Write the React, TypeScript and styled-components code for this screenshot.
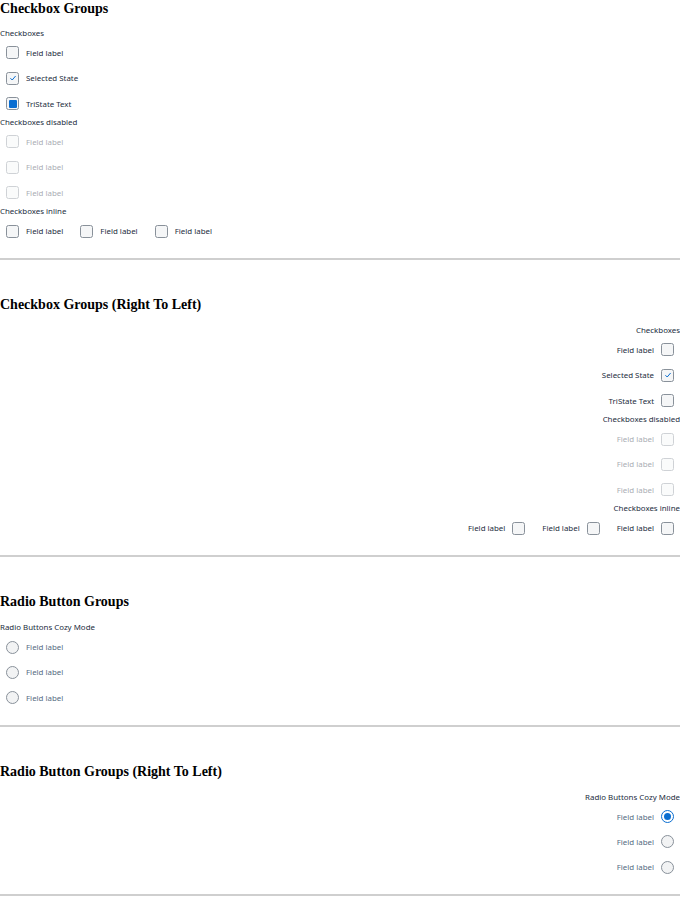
import styled, { createGlobalStyle, css } from "styled-components";

type BoxState = "empty" | "checked" | "tristate";

const GlobalStyle = createGlobalStyle`
  body {
    margin: 0;
    background: #ffffff;
    font-family: "Noto Sans", "Liberation Sans", sans-serif;
  }
`;

export default function App() {
  return (
    <>
      <GlobalStyle />
      <Section $first>
        <Title $first>Checkbox Groups</Title>
        <CheckboxGroups rtl={false} />
      </Section>
      <Divider />
      <Section>
        <Title>Checkbox Groups (Right To Left)</Title>
        <CheckboxGroups rtl />
      </Section>
      <Divider />
      <Section>
        <Title>Radio Button Groups</Title>
        <RadioGroup rtl={false} selected={-1} />
      </Section>
      <Divider />
      <Section>
        <Title>Radio Button Groups (Right To Left)</Title>
        <RadioGroup rtl selected={0} />
      </Section>
      <Divider />
    </>
  );
}

function CheckboxGroups({ rtl }: { rtl: boolean }) {
  const stacked: { label: string; state: BoxState }[] = [
    { label: "Field label", state: "empty" },
    { label: "Selected State", state: "checked" },
    { label: "TriState Text", state: rtl ? "empty" : "tristate" },
  ];
  return (
    <Groups $rtl={rtl}>
      <Fieldset>
        <Legend>Checkboxes</Legend>
        {stacked.map((item) => (
          <Item key={item.label}>
            <Checkbox state={item.state} />
            <Label>{item.label}</Label>
          </Item>
        ))}
      </Fieldset>
      <Fieldset>
        <Legend>Checkboxes disabled</Legend>
        {[0, 1, 2].map((i) => (
          <Item key={i} $disabled>
            <Checkbox state="empty" />
            <Label>Field label</Label>
          </Item>
        ))}
      </Fieldset>
      <Fieldset>
        <Legend>Checkboxes inline</Legend>
        <InlineRow>
          {[0, 1, 2].map((i) => (
            <Item key={i}>
              <Checkbox state="empty" />
              <Label>Field label</Label>
            </Item>
          ))}
        </InlineRow>
      </Fieldset>
    </Groups>
  );
}

function RadioGroup({ rtl, selected }: { rtl: boolean; selected: number }) {
  return (
    <Groups $rtl={rtl}>
      <Fieldset>
        <Legend>Radio Buttons Cozy Mode</Legend>
        {[0, 1, 2].map((i) => (
          <Item key={i}>
            <Radio $on={i === selected} />
            <Label $muted>Field label</Label>
          </Item>
        ))}
      </Fieldset>
    </Groups>
  );
}

function Checkbox({ state }: { state: BoxState }) {
  return (
    <Box $state={state}>
      {state === "checked" && (
        <svg width="8" height="8" viewBox="0 0 8 8">
          <polyline
            points="1.4,4.2 3.2,6 6.6,2"
            fill="none"
            stroke="#0a6ed1"
            strokeWidth="1"
          />
        </svg>
      )}
      {state === "tristate" && <TriMark />}
    </Box>
  );
}

const Section = styled.section<{ $first?: boolean }>`
  padding: ${(p) => (p.$first ? "0" : "36px")} 0 14.5px;
`;

const Title = styled.h2<{ $first?: boolean }>`
  margin: 0 0 ${(p) => (p.$first ? "10px" : "10.8px")};
  font-family: "Liberation Serif", "Times New Roman", serif;
  font-size: 14px;
  line-height: 17px;
  font-weight: 700;
  color: #000000;
`;

const Divider = styled.div`
  height: 2px;
  background: #cfcfcf;
`;

const Groups = styled.div<{ $rtl: boolean }>`
  direction: ${(p) => (p.$rtl ? "rtl" : "ltr")};
`;

const Fieldset = styled.div`
  display: flex;
  flex-direction: column;
`;

const Legend = styled.div`
  font-size: 7.9px;
  line-height: 13.15px;
  height: 13.15px;
  color: #1d2d3e;
`;

const InlineRow = styled.div`
  display: flex;
  gap: 5px;
`;

const Item = styled.label<{ $disabled?: boolean }>`
  display: flex;
  align-items: center;
  gap: 7px;
  height: 25.35px;
  padding: 0 6px;
  ${(p) =>
    p.$disabled &&
    css`
      opacity: 0.4;
    `}
`;

const Label = styled.span<{ $muted?: boolean }>`
  font-size: 7.9px;
  line-height: 10px;
  color: ${(p) => (p.$muted ? "#556b82" : "#1d2d3e")};
  white-space: nowrap;
`;

const Box = styled.span<{ $state: BoxState }>`
  box-sizing: border-box;
  width: 13px;
  height: 13px;
  border: 1px solid #89919a;
  border-radius: 2.5px;
  background: #f5f6f7;
  display: flex;
  align-items: center;
  justify-content: center;
  flex: none;
`;

const TriMark = styled.span`
  width: 8px;
  height: 8px;
  background: #0a6ed1;
  border-radius: 1px;
`;

const Radio = styled.span<{ $on: boolean }>`
  box-sizing: border-box;
  width: 13px;
  height: 13px;
  border-radius: 50%;
  border: 1px solid ${(p) => (p.$on ? "#0a6ed1" : "#89919a")};
  background: ${(p) => (p.$on ? "#ffffff" : "#f2f3f4")};
  display: flex;
  align-items: center;
  justify-content: center;
  flex: none;

  &::after {
    content: "";
    display: ${(p) => (p.$on ? "block" : "none")};
    width: 7px;
    height: 7px;
    border-radius: 50%;
    background: #0a6ed1;
  }
`;
